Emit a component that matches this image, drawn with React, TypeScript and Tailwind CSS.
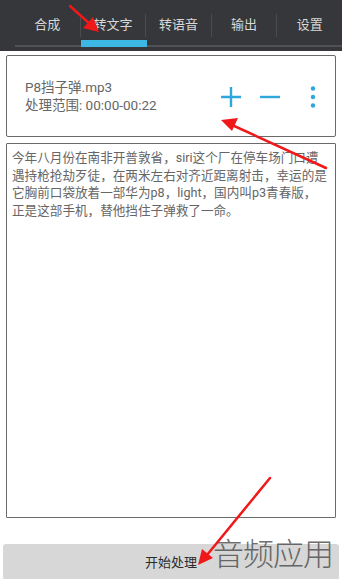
import React from "react";

const tabs = ["合成", "转文字", "转语音", "输出", "设置"];

export default function App() {
  return (
    <div
      className="relative w-[342px] h-[579px] bg-white overflow-hidden"
      style={{ fontFamily: "Roboto, 'Noto Sans CJK SC', sans-serif" }}
    >
      {/* Header */}
      <div className="h-[51px] bg-[#36373b] pl-[15px] flex flex-col">
        <div className="flex h-[40px] items-center">
          {tabs.map((t, i) => (
            <React.Fragment key={t}>
              {i > 0 && <div className="w-px h-[23px] bg-[#4b4c50] mt-[10px]" />}
              <div className="flex-1 flex items-center justify-center pt-[10px] text-[13px] text-[#d8d8d8]">
                {t}
              </div>
            </React.Fragment>
          ))}
        </div>
        <div className="relative h-[7px]">
          <div className="absolute left-0 right-0 bottom-[0px] h-[2px] bg-[#505155]" />
          <div className="absolute left-[66px] w-[66px] top-0 h-[7px] bg-[#3cb7e4]" />
        </div>
      </div>

      {/* File card */}
      <div className="mx-[6px] mt-[4px] h-[82px] border border-[#6a6a6a] rounded-[2px] flex items-center">
        <div className="pl-[18px] flex-1 text-[13.5px] leading-[18px] text-[#666]">
          <div>P8挡子弹.mp3</div>
          <div>处理范围: 00:00-00:22</div>
        </div>
        <div className="flex items-center pr-[19px] pt-[2px]">
          <svg width="22" height="22" viewBox="0 0 22 22">
            <path d="M11 1V21M1 11H21" stroke="#2ea7dd" strokeWidth="2.4" />
          </svg>
          <svg width="22" height="22" viewBox="0 0 22 22" className="ml-[17px]">
            <path d="M1 11H21" stroke="#2ea7dd" strokeWidth="2.4" />
          </svg>
          <svg width="6" height="22" viewBox="0 0 6 22" className="ml-[29px]">
            <circle cx="3" cy="2.5" r="2.2" fill="#2ea7dd" />
            <circle cx="3" cy="11" r="2.2" fill="#2ea7dd" />
            <circle cx="3" cy="19.5" r="2.2" fill="#2ea7dd" />
          </svg>
        </div>
      </div>

      {/* Text area */}
      <div className="mx-[6px] mt-[6px] h-[375px] border border-[#6a6a6a] rounded-[1px] pl-[5px] pt-[5px] text-[12.6px] leading-[17.7px] text-[#666] whitespace-nowrap">
        <div>今年八月份在南非开普敦省，siri这个厂在停车场门口遭</div>
        <div>遇持枪抢劫歹徒，在两米左右对齐近距离射击，幸运的是</div>
        <div>它胸前口袋放着一部华为p8，light，国内叫p3青春版，</div>
        <div>正是这部手机，替他挡住子弹救了一命。</div>
      </div>

      {/* Button */}
      <div className="mx-[3px] mt-[26px] h-[36px] bg-[#d6d7d6] rounded-[3px] flex items-center justify-center pt-[2px] text-[13px] text-[#2b2b2b]">
        开始处理
      </div>

      {/* Watermark */}
      <div className="absolute left-[213px] top-[535px] text-[31px] leading-[40px] text-[#4a4a4a] font-light tracking-[-1px] opacity-80">
        音频应用
      </div>

      {/* Red annotation arrows */}
      <svg className="absolute inset-0 pointer-events-none" width="342" height="579" viewBox="0 0 342 579">
        <g stroke="#f01818" strokeWidth="2.5" fill="#f01818" strokeLinecap="round">
          <line x1="70" y1="6" x2="91" y2="25" />
          <polygon points="99,32 83,28 93,17" stroke="none" />
          <line x1="326" y1="168" x2="232" y2="125" />
          <polygon points="221,120 238,118 232,131" stroke="none" />
          <line x1="270" y1="478" x2="207" y2="555" />
          <polygon points="198,565 202,549 213,558" stroke="none" />
        </g>
      </svg>
    </div>
  );
}
